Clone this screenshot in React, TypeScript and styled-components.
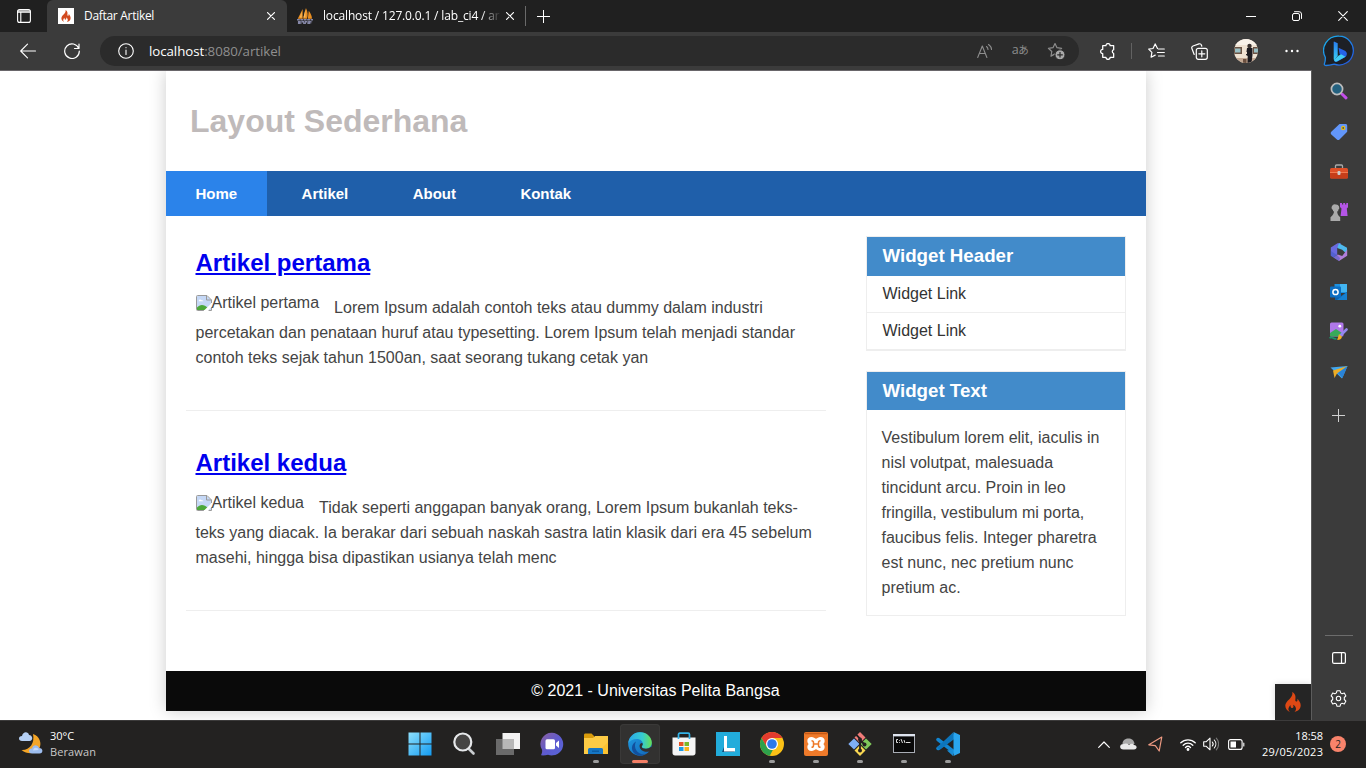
import React from "react";
import styled, { createGlobalStyle } from "styled-components";

const Global = createGlobalStyle`
  * { box-sizing: border-box; }
  html, body { margin: 0; padding: 0; }
  body { width: 1366px; height: 768px; overflow: hidden; background: #fff; }
  svg { display: block; flex: none; }
`;

const uiFont = `"Open Sans", "Noto Sans", sans-serif`;

/* ---------- desktop frame ---------- */

const Screen = styled.div`
  width: 1366px;
  height: 768px;
  display: flex;
  flex-direction: column;
  font-family: ${uiFont};
`;

const Slot = styled.div<{ $w: number; $h?: number; $color?: string }>`
  width: ${(p) => p.$w}px;
  ${(p) => (p.$h ? `height: ${p.$h}px;` : "")}
  ${(p) => (p.$color ? `color: ${p.$color};` : "")}
  flex: none;
  display: flex;
  align-items: center;
  justify-content: center;
`;

/* ---------- tab strip ---------- */

const TabStrip = styled.div`
  height: 32px;
  flex: none;
  display: flex;
  background: #202020;
  color: #fff;
`;

const Tab = styled.div<{ $active?: boolean }>`
  width: ${(p) => (p.$active ? 240 : 238)}px;
  height: 32px;
  padding: 0 ${(p) => (p.$active ? 8 : 7)}px 0 ${(p) => (p.$active ? 11 : 10)}px;
  display: flex;
  align-items: center;
  background: ${(p) => (p.$active ? "#3b3b3b" : "transparent")};
  border-radius: 6px 6px 0 0;
`;

const TabTitle = styled.span<{ $faded?: boolean; $spacing: number }>`
  flex: 1;
  margin-left: 10px;
  font-size: 12px;
  line-height: 16px;
  letter-spacing: ${(p) => p.$spacing}px;
  white-space: nowrap;
  ${(p) =>
    p.$faded
      ? "mask-image: linear-gradient(to right, #000 158px, transparent 178px);"
      : ""}
`;

const StripDivider = styled.div`
  width: 1px;
  height: 20px;
  margin-top: 6px;
  background: #6a6a6a;
`;

const Grow = styled.div`
  flex: 1;
`;

/* ---------- toolbar ---------- */

const Toolbar = styled.div`
  height: 38px;
  flex: none;
  display: flex;
  align-items: center;
  padding-left: 6px;
  background: #3b3b3b;
  color: #fff;
`;

const AddressBar = styled.div`
  width: 979px;
  height: 30px;
  margin: 0 6px;
  padding: 0 5px 0 16px;
  display: flex;
  align-items: center;
  border-radius: 15px;
  background: #2b2b2b;
`;

const Url = styled.div`
  flex: 1;
  margin-left: 13px;
  font-size: 13.3px;
  letter-spacing: -0.06px;
  color: #8f8f8f;
  b { font-weight: 400; color: #fff; }
`;

const Translate = styled.span`
  padding-bottom: 3px;
  font: 12.5px/16px "Open Sans", "Noto Sans CJK JP", sans-serif;
  letter-spacing: -0.4px;
  color: #8d8d8d;
  small { font-size: 10.5px; }
`;

const ToolDivider = styled.div`
  width: 1px;
  height: 16px;
  margin: 0 2px;
  background: #626262;
`;

/* ---------- body ---------- */

const Body = styled.div`
  height: 650px;
  flex: none;
  display: flex;
`;

const Viewport = styled.div`
  position: relative;
  width: 1311px;
  height: 650px;
  overflow: hidden;
  border-top: 1px solid #69666a;
  background: #fff;
  font-family: "Liberation Sans", Arial, sans-serif;
  font-size: 16px;
  color: #444;
`;

const EdgeRail = styled.div`
  width: 55px;
  padding: 0.5px 0 1px;
  display: flex;
  flex-direction: column;
  background: #3b3b3b;
  border-left: 1px solid #5c5c5c;
`;

const RailDivider = styled.div`
  width: 28px;
  height: 1px;
  margin: 0 0 1px 13px;
  background: #6c6c6c;
`;

const DebugToggle = styled.div`
  position: absolute;
  right: 0;
  bottom: 0;
  width: 36px;
  height: 36px;
  display: flex;
  align-items: center;
  justify-content: center;
  background: #252525;
  box-shadow: 0 0 6px rgba(0, 0, 0, 0.15);
`;

/* ---------- web page ---------- */

const Container = styled.div`
  width: 980px;
  margin: 0 auto;
  background: #fff;
  box-shadow: 0 0 16px #ccc;
`;

const Header = styled.header`
  height: 100px;
  padding-left: 24.5px;
  display: flex;
  align-items: center;
`;

const SiteTitle = styled.h1`
  margin: 0;
  font-size: 32px;
  line-height: 36px;
  color: #bfbaba;
`;

const Nav = styled.nav`
  height: 45px;
  display: flex;
  gap: 4.4px;
  background: #1f5faa;
`;

const NavLink = styled.a<{ $active?: boolean }>`
  padding: 0 30px;
  font-size: 15px;
  font-weight: 700;
  line-height: 46px;
  color: #fff;
  background: ${(p) => (p.$active ? "#2b83ea" : "transparent")};
`;

const Columns = styled.div`
  height: 455px;
  padding: 20px 20px 0;
  display: flex;
  justify-content: space-between;
`;

const Articles = styled.main`
  width: 640px;
`;

const Entry = styled.article`
  height: 200px;
  padding: 38px 10px 0;
  border-bottom: 1px solid #eee;
  &:first-child { height: 175px; padding-top: 13px; }
`;

const EntryTitle = styled.h2`
  margin: 0 0 18px;
  font-size: 24px;
  line-height: 28px;
  color: #0000ee;
  text-decoration: underline;
`;

const EntryText = styled.p`
  margin: 0;
  line-height: 25px;
`;

const MissingImage = styled.span`
  float: left;
  display: flex;
  height: 18px;
  margin-right: 15px;
  line-height: 16px;
`;

const Aside = styled.aside`
  width: 260px;
`;

const Widget = styled.section`
  margin-bottom: 20px;
  border: 1px solid #eee;
`;

const WidgetTitle = styled.h3`
  height: 38.5px;
  margin: 0;
  padding: 0 16px;
  font-size: 18.72px;
  line-height: 37px;
  color: #fff;
  background: #428bca;
`;

const WidgetLink = styled.a`
  display: block;
  padding: 0 16px;
  line-height: 36px;
  border-bottom: 1px solid #eee;
  color: #333;
`;

const WidgetText = styled.p`
  margin: 0;
  padding: 15px 14px 15px 15px;
  line-height: 25px;
`;

const Footer = styled.footer`
  height: 40px;
  line-height: 40px;
  text-align: center;
  color: #fff;
  background: #0a0a0a;
`;

/* ---------- taskbar ---------- */

const Taskbar = styled.div`
  height: 48px;
  flex: none;
  display: flex;
  align-items: center;
  box-shadow: inset 0 1px #3c3b3b;
  background: #232221;
  color: #fff;
`;

const Weather = styled.div`
  width: 398px;
  padding-left: 18px;
  display: flex;
  align-items: center;
  gap: 6px;
`;

const Lines = styled.div<{ $right?: boolean }>`
  font-size: 11px;
  line-height: 16px;
  letter-spacing: -0.05px;
  text-align: ${(p) => (p.$right ? "right" : "left")};
`;

const Muted = styled.div`
  color: #c8c8c8;
  letter-spacing: 0.1px;
`;

const DateLine = styled.div`
  letter-spacing: 0.3px;
  margin-right: -0.3px;
`;

const AppButton = styled.div<{ $current?: boolean }>`
  position: relative;
  width: 40px;
  height: 40px;
  margin: 0 2px;
  flex: none;
  display: flex;
  align-items: center;
  justify-content: center;
  border-radius: 4px;
  background: ${(p) => (p.$current ? "#323130" : "transparent")};
  box-shadow: ${(p) => (p.$current ? "inset 0 0 0 1px #3a3938" : "none")};
`;

const Running = styled.i<{ $current?: boolean }>`
  position: absolute;
  bottom: 1px;
  left: 50%;
  width: ${(p) => (p.$current ? 16 : 6)}px;
  height: 3px;
  transform: translateX(-50%);
  border-radius: 2px;
  background: ${(p) => (p.$current ? "#f47f66" : "#9b9b9b")};
`;

const Clock = styled.div`
  width: 68px;
`;

const Badge = styled.div`
  width: 16px;
  height: 16px;
  margin: 0 20px 0 7px;
  border-radius: 50%;
  font-size: 10px;
  line-height: 16px;
  text-align: center;
  color: #222;
  background: #f8836b;
`;

/* ---------- drawings ---------- */

type SP = { w: number; h?: number; vb: string; children: React.ReactNode; sw?: number };
const Line = ({ w, h = w, vb, children, sw = 1 }: SP) => (
  <svg width={w} height={h} viewBox={vb} fill="none" stroke="currentColor" strokeWidth={sw} strokeLinecap="round" strokeLinejoin="round">
    {children}
  </svg>
);
const Art = ({ w, h = w, vb, children }: SP) => (
  <svg width={w} height={h} viewBox={vb}>{children}</svg>
);

const flamePath = "M7.2 0c.7 2.500-.3 4.200-2 6.200C3.100 8.600.3 10.600.3 13.800c0 3 2 5.200 4.700 6.100-1.400-1.100-1.900-2.500-1.400-4 .3-1.100 1.100-1.900 1.800-2.900.3 1.300 0 2.300 1.100 2.900 1.800.8 2.600-1.100 1.500-3.200 2.900 1.200 4.300 5 1.500 7.200 3.600-.7 6.200-3.200 6.200-6.700 0-3-1.900-4.500-3.100-6.500-.4 1 .2 2.100-.7 2.700-.9.500-1.800-.1-1.600-1.300C10.700 5 11 2.100 7.200 0z";

const Flame = () => (
  <Art w={16} h={20} vb="0 0 16 20"><path fill="#dd4814" d={flamePath} /></Art>
);

const Close = ({ w = 8, sw = 1.2 }: { w?: number; sw?: number }) => (
  <Line w={w} vb="0 0 10 10" sw={(sw * 10) / w}><path d="M.7.7l8.600 8.600M9.300.7L.7 9.300" /></Line>
);

const Plus = ({ w }: { w: number }) => (
  <svg width={w} height={w} viewBox="0 0 13 13" stroke="currentColor" fill="none"><path d="M6.500 0v13M0 6.500h13" /></svg>
);

const Sailboats = () => (
  <Art w={16} vb="0 0 17 17">
    <path fill="#e88d20" d="M6 1v10.500H.8zM9.500 0c2 4 2.500 8 1 11.500H6.500zM12.500 3c2 3 3.800 6 3.300 8.500h-4.300z" />
    <path fill="#f7b95b" d="M9 1v9H6.800zM5 4v6H3z" />
    <path d="M0 12.500h17M1 14.500h15M1 16.300h4M6.500 16.300h3M11 16.300h4" stroke="#8688a8" strokeWidth="1.600" strokeDasharray="3 .6" />
  </Art>
);

const BrokenImage = () => (
  <Art w={16} vb="0 0 16 16">
    <path fill="#c5d8f6" d="M1 1h10l4 4v10H1z" />
    <path fill="#fff" d="M2.800 6.200c-.3-1.800 2-2.400 2.700-1C7.200 4.800 7.800 6.200 6.800 6.200z" />
    <path fill="#4ca83b" d="M1 15v-2.500C4 9 8 9 12 13l-2 2z" />
    <path fill="none" stroke="#9a9a9a" d="M8 15.500H1.500a1 1 0 0 1-1-1v-13a1 1 0 0 1 1-1h9.500l4.500 4.500v3M10.500.5v4.500h5M12.500 15.500h3V12" />
    <path fill="#fff" d="M16 7.800L7.500 16h4L16 11.500z" />
  </Art>
);

const Avatar = () => (
  <Art w={24} vb="0 0 24 24">
    <defs><clipPath id="face"><circle cx="12" cy="12" r="12" /></clipPath></defs>
    <g clipPath="url(#face)">
      <path fill="#efe2d2" d="M0 0h24v24H0z" />
      <path fill="#f8f1e8" d="M0 0h24v6H0z" />
      <path fill="#6b5344" d="M0 8h8v7H0zM19 8h5v7h-5z" />
      <path fill="#9ac0c4" d="M1 9.500h5.500v4H1zM20 9.500h4v4h-4z" />
      <path fill="#c3a893" d="M0 19h24v5H0z" />
      <circle cx="15.500" cy="7" r="2.200" fill="#38302d" />
      <path fill="#1d1b20" d="M13 9h5.500v7L17.500 24h-4l.2-7-1.700-1z" />
      <path fill="#f1dfcf" d="M10.500 13h2.500v2h-2.500z" />
      <path fill="#6b5040" d="M9 20h3.500v4H9z" />
    </g>
  </Art>
);

const Bing = () => (
  <Art w={32} vb="0 0 32 32">
    <defs>
      <linearGradient id="bo" x1="0" y1="0" x2="1" y2="1"><stop offset="0" stopColor="#18b7ee" /><stop offset="1" stopColor="#2550df" /></linearGradient>
      <linearGradient id="bi" x1="0" y1="0" x2="0" y2="1"><stop offset="0" stopColor="#2a7df0" /><stop offset="1" stopColor="#38cff4" /></linearGradient>
    </defs>
    <path fill="#1d2026" stroke="url(#bo)" strokeWidth="1.300" d="M16 1.200a14.400 14.400 0 1 1-4.800 28c-2.600.7-5.600 1.300-8.200 1.300-1.500 0-2-.8-1.500-2 .8-2 .9-4 .8-6.200A14.400 14.400 0 0 1 16 1.200z" />
    <path fill="url(#bi)" d="M11 6.500l3.700 1.700v12.600l-3.300 4.400c-.6-.4-.7-1-.7-2V7z" />
    <path fill="#2563e8" d="M15.500 12.800l6.500 3c2.300 1.200 2.500 4 .7 6l-8.300 4.600c-1.700.9-3 .2-3.300-1.200l6.900-5.100-1.300-.8z" />
    <path fill="#42cdf5" d="M15 21l3-1.800 4.500 2.600-8.200 4.500c-1.700.8-2.700.2-3.200-1.200z" />
  </Art>
);

const railIcons: React.ReactNode[] = [
  <Art w={18} vb="0 0 18 18"><path d="M12 12l4 3.800" stroke="#c34de9" strokeWidth="3" strokeLinecap="round" /><circle cx="7" cy="7" r="5.600" fill="#24617f" stroke="#bcbcbc" strokeWidth="1.700" /></Art>,
  <Art w={18} vb="0 0 18 18"><path fill="#6296fa" d="M9.500 1h6C16.500 1 17.200 1.700 17.200 2.700v6L9.500 16.500c-.8.8-1.800.8-2.600 0L1.300 11.400c-.8-.8-.8-1.800 0-2.600z" /><circle cx="13.200" cy="5" r="1.600" fill="#555" stroke="#e3bd1c" strokeWidth="1.300" /></Art>,
  <Art w={18} vb="0 0 18 18"><path d="M5.500 5V3c0-.6.400-1 1-1h5c.6 0 1 .4 1 1v2" fill="none" stroke="#aaa" strokeWidth="1.300" /><rect y="5" width="18" height="10.500" rx="1.500" fill="#df5028" /><path d="M0 10h18v4a1.500 1.500 0 0 1-1.500 1.500h-15A1.500 1.500 0 0 1 0 14z" fill="#c63e1a" /><path d="M0 9.500h18" stroke="#f27b50" /><rect x="7.500" y="8" width="3" height="4" rx="1" fill="#ccc" /></Art>,
  <Art w={18} vb="0 0 18 18"><path fill="#b455e6" d="M10 0h2v1.500h1.200V0h1.900v1.500h1.200V0h2v4l-1.500 1.500.8 7.500h-7l.9-7.500L10 4z" /><path fill="#aaa" d="M6 1.500a3.200 3.200 0 0 1 2.200 5.600v1.200H7.200c0 2 .5 4 3 6V18H.5v-3.700c2.500-2 3.500-4 3.500-6H3V7.100A3.200 3.200 0 0 1 6 1.500z" /></Art>,
  <Art w={18} vb="0 0 18 18"><path fill="#6a6ae0" d="M7.500.3L11 0 7.200 5v6.500L3.500 14.500.8 12.800V4.500z" /><path fill="#4eb9ee" d="M9 .2l8 4.500v6.500l-4.800-4.500L7.200 5z" /><path fill="#b07edb" d="M17.200 6.500v6.300L9 18 3.500 14.500l4.200-3 4.500 1.500z" /><path fill="#3b58c0" d="M.8 8v4.800L9 18l1-3-3-3z" opacity=".5" /></Art>,
  <Art w={18} vb="0 0 18 18"><path fill="#1c91df" d="M4.500 1h12v9h-12z" /><path fill="#42b5f2" d="M10 1h7v8h-7z" /><path fill="#0b62ad" d="M5 9l6 4 6-4v8H5z" /><path fill="#1680d0" d="M17 9v8H7z" /><rect x="0" y="3.500" width="11" height="11" rx="1" fill="#0c6fc3" /><circle cx="5.500" cy="9" r="2.600" fill="none" stroke="#fff" strokeWidth="1.500" /></Art>,
  <Art w={19} vb="0 0 19 19"><rect x="1" y=".5" width="13.500" height="14" rx="1.500" fill="#b078ea" /><circle cx="10.800" cy="4.200" r="1.400" fill="#fff" /><path fill="#38aa5a" d="M1 11l6-4 6 4v3.500H1z" /><path d="M.5 16c3-2 3.500 1.500 7 .8" stroke="#1d946b" strokeWidth="1.600" fill="none" /><path d="M12 13l5.500-5.500" stroke="#9288ef" strokeWidth="2.600" strokeLinecap="round" /><path fill="#f4af24" d="M10 12l3 2.800c-.5 2.500-2 3.200-4.800 3.200z" /></Art>,
  <Art w={18} vb="0 0 18 18"><path fill="#41a7ef" d="M.5 4.500L17.500 3 12 15.500z" /><path fill="#ecac26" d="M3 7.500L17.500 3 7 10.500l-2.500 4.500z" /><path fill="#2a83d6" d="M17.500 3L8 10l4.500 5z" /></Art>,
];

const Folder = () => (
  <Art w={24} vb="0 0 24 24"><path fill="#d99b0b" d="M0 3c0-1 .5-1.500 1.500-1.500h6L10 4v4H0z" /><path fill="#fccb45" d="M0 6h9l2-2h13v18H0z" /><path fill="#f7b91e" d="M24 10v12H12z" opacity=".5" /><path fill="#1677c4" d="M4 17.500A1.500 1.500 0 0 1 5.500 16h12a1.500 1.500 0 0 1 1.500 1.500V22H4z" /><path stroke="#0a559a" strokeWidth="1.200" d="M8 19.200h7" /></Art>
);

const EdgeLogo = () => (
  <Art w={24} vb="0 0 24 24">
    <defs>
      <linearGradient id="e1"><stop offset="0" stopColor="#2ba8e8" /><stop offset=".6" stopColor="#36cbd0" /><stop offset="1" stopColor="#68e052" /></linearGradient>
      <linearGradient id="e2" x1="0" y1="0" x2="1" y2="1"><stop offset="0" stopColor="#1f9ee4" /><stop offset="1" stopColor="#1263b5" /></linearGradient>
    </defs>
    <circle cx="12" cy="12" r="11.800" fill="url(#e2)" />
    <path fill="url(#e1)" d="M.3 11C1 5 6 .2 12 .2c7 0 11.800 5 11.800 10.300 0 4-2.800 6.200-5.800 6.200-2.500 0-4.200-1-4.200-2 0-.8 1-1.200 1-2.900 0-2.500-2.300-4.800-6-4.800-4 0-7.100 2-8.500 4z" />
    <path fill="#12509d" d="M8 9.500c-3 6 1 13.300 9 13-2 1.200-4 1.400-6 1.100-5-1-7.500-5-7-8.600.4-2.500 2-4.500 4-5.500z" />
    <path fill="#323130" d="M14.800 11.800c0 1.700-1 2-1 2.900 0 1 1.700 2 4.200 2 2 0 3.600-.8 4.600-1.700l1.400 0-.8 3.500c-2 1.500-5.200 1.700-7.600.7-3-1-4.400-3.500-4-6 .4-1.800 2.300-3.200 3.200-1.400z" />
  </Art>
);

const Chrome = () => (
  <Art w={24} vb="0 0 24 24">
    <circle cx="12" cy="12" r="12" fill="#fbc116" />
    <path fill="#e33b2e" d="M1.600 6A12 12 0 0 1 22.400 6H12L6.800 15z" />
    <path fill="#2da14c" d="M1.600 6l5.200 9c1.500 2.300 3.500 3.200 6 3l-3 5.800A12 12 0 0 1 1.600 6z" />
    <circle cx="12" cy="12" r="6" fill="#fff" /><circle cx="12" cy="12" r="4.800" fill="#2d78ea" />
  </Art>
);

const Xampp = () => (
  <Art w={24} vb="0 0 24 24">
    <rect width="24" height="24" rx="2" fill="#ee7a2a" />
    <path d="M1 1.500h22" stroke="#c65a16" strokeWidth="1.500" />
    <path d="M8.500 12C3.500 12 3.500 6.200 7.500 6.200c2 0 2.500 1.800 4.500 1.800s2.500-1.800 4.500-1.800c4 0 4 5.800-1 5.800 5 0 5 5.800 1 5.800-2 0-2.500-1.800-4.500-1.800s-2.500 1.800-4.500 1.800c-4 0-4-5.800 1-5.800z" fill="#fff" stroke="#fff" strokeWidth="2.600" strokeLinejoin="round" />
    <path d="M7.500 8.700c1.500 0 2 .8 2 1.800v3c0 1-.5 1.800-2 1.800M16.500 8.700c-1.500 0-2 .8-2 1.800v3c0 1 .5 1.800 2 1.800M9.500 12h5" stroke="#ee7a2a" strokeWidth="1.500" fill="none" />
  </Art>
);

type AppEntry = { icon: React.ReactNode; running?: boolean; current?: boolean };
const apps: AppEntry[] = [
  { icon: <Art w={24} vb="0 0 24 24"><defs><linearGradient id="wn" x1="0" y1="0" x2="1" y2="1"><stop offset="0" stopColor="#8ee0fd" /><stop offset="1" stopColor="#139bf1" /></linearGradient></defs><path fill="url(#wn)" d="M.5.5h11v11H.5zM12.500.5h11v11h-11zM.5 12.500h11v11H.5zM12.500 12.500h11v11h-11z" /></Art> },
  { icon: <Art w={24} vb="0 0 24 24"><path d="M16.500 16.500l5 5" stroke="#c9cdd0" strokeWidth="2.600" strokeLinecap="round" /><circle cx="10.800" cy="10" r="8.500" fill="#454443" stroke="#e6e8ea" strokeWidth="2.200" /></Art> },
  { icon: <Art w={24} vb="0 0 24 24"><path fill="#f2f2f2" d="M6.500 1H24v16H6.500z" /><path fill="#6a6a6a" d="M0 7h18v16H0z" /><path fill="#b7b7b7" d="M6.500 7H18v10H6.500z" /></Art> },
  { icon: <Art w={24} vb="0 0 24 24"><defs><linearGradient id="ch" x1="0" y1="0" x2="1" y2="1"><stop offset="0" stopColor="#8a5f9f" /><stop offset=".55" stopColor="#5d5bd0" /><stop offset="1" stopColor="#5867d9" /></linearGradient></defs><path fill="url(#ch)" d="M12 .8a11.300 11.300 0 1 1-4 21.900c-2 .6-4.500.8-7 .6.800-2 1.500-3.500 1-5.500A11.300 11.300 0 0 1 12 .8z" /><rect x="5.500" y="7.200" width="9.500" height="10" rx="1.500" fill="#fff" /><path fill="#fff" d="M16 11l3-2.500V16l-3-2.500z" /></Art> },
  { icon: <Folder />, running: true },
  { icon: <EdgeLogo />, running: true, current: true },
  { icon: <Art w={24} vb="0 0 24 24"><path fill="#f5f5f5" d="M.5 5.500h23V21c0 1.500-1 2.500-2.500 2.500H3C1.500 23.500.5 22.500.5 21z" /><path d="M6.500 7V2.500c0-.8.500-1.300 1.300-1.300h8.400c.8 0 1.300.5 1.300 1.300V7" fill="none" stroke="#35b4e8" strokeWidth="1.700" /><path fill="#e85425" d="M7 10h4.500v4H7z" /><path fill="#7ab828" d="M12.500 10H17v4h-4.500z" /><path fill="#1a9be6" d="M7 15h4.500v4H7z" /><path fill="#f9b31b" d="M12.500 15H17v4h-4.500z" /></Art> },
  { icon: <Art w={24} vb="0 0 24 24"><path fill="#22acdb" d="M0 0h24v24H0z" /><path fill="#154b78" d="M8 4v11l-2 5h12l1-1H9z" /><path fill="#fff" d="M8 4h3v12h8v3.500H8z" /></Art> },
  { icon: <Chrome />, running: true },
  { icon: <Xampp />, running: true },
  { icon: <Art w={24} vb="0 0 24 24"><path fill="#f07c78" d="M12 0l5.500 5.500L12 11 6.500 5.500z" /><path fill="#7eaef5" d="M6 6.500l5.500 5.500L6 17.500.3 12z" /><path fill="#80c95b" d="M18 6.500l5.700 5.500-5.700 5.500-5.500-5.500z" /><path fill="#f9d852" d="M12 13l5.500 5.500L12 24l-5.500-5.500z" /><path d="M8 2.500l4 4V19M12 8l4.500 4.500" stroke="#231f20" strokeWidth="1.800" fill="none" /><circle cx="12" cy="7.500" r="2" fill="#231f20" /><circle cx="16.500" cy="12.500" r="2" fill="#231f20" /><circle cx="12" cy="18.500" r="2" fill="#231f20" /></Art>, running: true },
  { icon: <Art w={24} vb="0 0 24 24"><path fill="#a9adb5" d="M1 2h22v19H1z" /><path fill="#dfe5ef" d="M1 2h22v2H1z" /><path fill="#090909" d="M2 4.500h20v15.500H2z" /><path d="M6 7.500H4.500v3H6M7.500 8v.8M7.500 10v.8M9 7l1.500 4M12 8l1 3" stroke="#ddd" fill="none" /><path d="M14 10.500h4.500" stroke="#ddd" /></Art>, running: true },
  { icon: <Art w={24} vb="0 0 24 24"><path d="M2 7.500L18 20M2 16.500L18 4" stroke="#1285cf" strokeWidth="3.500" strokeLinecap="round" /><path fill="#0d75bb" d="M1 15.500L17 .5l2 6L3.500 18z" /><path fill="#29a5ee" d="M17.500 0L24 3v18l-6.500 3z" /><path fill="#188bd5" d="M17 17.500V24l-6-5.500z" /></Art>, running: true },
];

const WeatherIcon = () => (
  <Art w={26} vb="0 0 26 26">
    <path fill="#f4a526" d="M15 3c6.500 2 9 9 6.500 14-3.500 6-11.500 7-18 2 8 .5 13.500-6.500 11.500-16z" />
    <path fill="#b5d0f5" d="M4 10c-4 0-4-5 0-5C5 0 10.500.5 11 4c4 0 4.500 6 .5 6z" />
    <path fill="#9dbdee" d="M14 22.500c-4 0-4-5.500 0-5 1-4.500 6-4 7-.5 4.500 0 4.500 5.500.5 5.500z" />
    <path fill="#c8dcfa" d="M15 19.500c1-4 5-3 5.500-.5z" />
  </Art>
);

/* ---------- page ---------- */

const articles = [
  { title: "Artikel pertama", text: "Lorem Ipsum adalah contoh teks atau dummy dalam industri percetakan dan penataan huruf atau typesetting. Lorem Ipsum telah menjadi standar contoh teks sejak tahun 1500an, saat seorang tukang cetak yan" },
  { title: "Artikel kedua", text: "Tidak seperti anggapan banyak orang, Lorem Ipsum bukanlah teks-teks yang diacak. Ia berakar dari sebuah naskah sastra latin klasik dari era 45 sebelum masehi, hingga bisa dipastikan usianya telah menc" },
];

const WebPage = () => (
  <Container>
    <Header><SiteTitle>Layout Sederhana</SiteTitle></Header>
    <Nav>
      <NavLink $active>Home</NavLink>
      <NavLink>Artikel</NavLink>
      <NavLink>About</NavLink>
      <NavLink>Kontak</NavLink>
    </Nav>
    <Columns>
      <Articles>
        {articles.map((a) => (
          <Entry key={a.title}>
            <EntryTitle>{a.title}</EntryTitle>
            <EntryText><MissingImage><BrokenImage />{a.title}</MissingImage>{a.text}</EntryText>
          </Entry>
        ))}
      </Articles>
      <Aside>
        <Widget>
          <WidgetTitle>Widget Header</WidgetTitle>
          <WidgetLink>Widget Link</WidgetLink>
          <WidgetLink>Widget Link</WidgetLink>
        </Widget>
        <Widget>
          <WidgetTitle>Widget Text</WidgetTitle>
          <WidgetText>Vestibulum lorem elit, iaculis in nisl volutpat, malesuada tincidunt arcu. Proin in leo fringilla, vestibulum mi porta, faucibus felis. Integer pharetra est nunc, nec pretium nunc pretium ac.</WidgetText>
        </Widget>
      </Aside>
    </Columns>
    <Footer>© 2021 - Universitas Pelita Bangsa</Footer>
  </Container>
);

const starPath = "M8 1.500l2 4.200 4.600.6-3.400 3.200.8 4.600L8 11.900l-4 2.200.8-4.600L1.400 6.300 6 5.700z";

export default function App() {
  return (
    <Screen>
      <Global />
      <TabStrip>
        <Slot $w={47}><Line w={14} vb="0 0 14 14" sw={1.1}><rect x=".6" y=".6" width="12.800" height="12.800" rx="2" /><path d="M.6 3.200h12.800M3.800 3.200v10M1 2h12" /></Line></Slot>
        <Tab $active>
          <Art w={16} vb="0 0 16 16"><path fill="#fff" d="M0 0h16v16H0z" /><svg x="3" y="2" width="10" height="12" viewBox="0 0 16 20"><path fill="#d2481d" d={flamePath} /></svg></Art>
          <TabTitle $spacing={-0.3}>Daftar Artikel</TabTitle>
          <Slot $w={16}><Close w={8} /></Slot>
        </Tab>
        <Tab>
          <Sailboats />
          <TabTitle $faded $spacing={-0.16}>localhost / 127.0.0.1 / lab_ci4 / ar</TabTitle>
          <Slot $w={16}><Close w={8} /></Slot>
        </Tab>
        <StripDivider />
        <Slot $w={35}><Plus w={13} /></Slot>
        <Grow />
        <Slot $w={46}><Line w={10} vb="0 0 10 10"><path d="M0 5.500h10" /></Line></Slot>
        <Slot $w={46}><Line w={10} vb="0 0 10 10"><rect x=".5" y="2.500" width="7" height="7" rx="1.500" /><path d="M2.500.7H7A2.400 2.400 0 0 1 9.500 3v4.500" /></Line></Slot>
        <Slot $w={46}><Close w={10} sw={1.1} /></Slot>
      </TabStrip>

      <Toolbar>
        <Slot $w={44}><Line w={16} vb="0 0 16 16" sw={1.1}><path d="M15.500 8H.7M7.500 1.200L.7 8l6.800 6.800" /></Line></Slot>
        <Slot $w={44}><Line w={16} vb="0 0 16 16" sw={1.2}><path d="M14.800 5.500A7.300 7.300 0 1 0 15.300 8M15 1v4.500h-4.500" /></Line></Slot>
        <AddressBar>
          <Slot $w={20}><Line w={16} vb="0 0 16 16" sw={1.1}><circle cx="8" cy="8" r="7.300" /><path d="M8 7v4.500M8 4.600v.2" /></Line></Slot>
          <Url><b>localhost</b>:8080/artikel</Url>
          <Slot $w={35} $color="#8d8d8d"><Line w={16} vb="0 0 16 16" sw={1.1}><path d="M.7 14.500L5.300 3l4.600 11.500M2.300 10.500h6M9.500 3.500c1 .8 1.500 1.800 1.500 3M11.500 1.500c2 1.300 3 3 3 5" /></Line></Slot>
          <Slot $w={36}><Translate>a<small>あ</small></Translate></Slot>
          <Slot $w={36}><Art w={18} vb="0 0 18 18"><path d={starPath} fill="none" stroke="#8d8d8d" strokeWidth="1.200" strokeLinejoin="round" /><circle cx="13" cy="12.800" r="5" fill="#a9a9a9" stroke="#2b2b2b" /><path d="M13 10v5.600M10.200 12.800h5.600" stroke="#2b2b2b" strokeWidth="1.200" /></Art></Slot>
        </AddressBar>
        <Slot $w={44}><Line w={17} vb="0 0 16 16" sw={1.2}><path d="M3.500 2.500h3a2 2 0 0 1 4 0h3.300v3.800a1.900 1.900 0 0 0 0 3.600v3.600h-3.300a2 2 0 0 1-4 0h-3V10a2 2 0 0 1 0-4z" /></Line></Slot>
        <ToolDivider />
        <Slot $w={44}><Line w={17} h={16} vb="0 0 17 16" sw={1.2}><path d="M9.500 5.500L7.200.9 5 5.500l-4.300.6 3.200 3.300-.8 4.800 4.100-2.100M10.500 6h5.800M9.500 9.500h6.800M10.500 13h5.800" /></Line></Slot>
        <Slot $w={43}><Line w={17} vb="0 0 17 17" sw={1.2}><path d="M3.200 11.500L.9 5.500C.5 4.500.9 3.500 2 3l6-2.100c1.200-.4 2 .1 2.400 1.100l.4 1.200" /><rect x="5.300" y="5.300" width="11" height="11" rx="2" /><path d="M10.800 7.800v6M7.800 10.800h6" /></Line></Slot>
        <Slot $w={49}><Avatar /></Slot>
        <Slot $w={44}><Art w={14} h={4} vb="0 0 14 4"><circle cx="1.500" cy="2" r="1.200" fill="#fff" /><circle cx="7" cy="2" r="1.200" fill="#fff" /><circle cx="12.500" cy="2" r="1.200" fill="#fff" /></Art></Slot>
        <Slot $w={50}><Bing /></Slot>
      </Toolbar>

      <Body>
        <Viewport>
          <WebPage />
          <DebugToggle><Flame /></DebugToggle>
        </Viewport>
        <EdgeRail>
          {railIcons.map((icon, i) => <Slot key={i} $w={53} $h={i ? 40 : 41}>{icon}</Slot>)}
          <Slot $w={53} $h={47} $color="#d0d0d0"><Plus w={13} /></Slot>
          <Grow />
          <RailDivider />
          <Slot $w={54} $h={41} $color="#fff"><Line w={14} h={12} vb="0 0 14 12" sw={1.2}><rect x=".6" y=".6" width="12.800" height="10.800" rx="1.500" /><path d="M9.500.6v10.800" /></Line></Slot>
          <Slot $w={53} $h={41} $color="#fff"><Line w={17} vb="0 0 17 17" sw={1.1}><circle cx="8.500" cy="8.500" r="2.200" /><path d="M6.900.8h3.200l.5 2.100 1.500.9 2.200-.7 1.600 2.800-1.600 1.600v2l1.600 1.600-1.600 2.800-2.200-.7-1.500.9-.5 2.100H6.900l-.5-2.100-1.500-.9-2.200.7-1.600-2.800 1.600-1.600v-2L1.100 5.900l1.600-2.800 2.200.7 1.500-.9z" /></Line></Slot>
        </EdgeRail>
      </Body>

      <Taskbar>
        <Weather>
          <WeatherIcon />
          <Lines>30°C<Muted>Berawan</Muted></Lines>
        </Weather>
        {apps.map((a, i) => (
          <AppButton key={i} $current={a.current}>
            {a.icon}
            {a.running && <Running $current={a.current} />}
          </AppButton>
        ))}
        <Grow />
        <Slot $w={24}><Line w={12} h={7} vb="0 0 12 7" sw={1.2}><path d="M.7 6.300L6 1l5.300 5.300" /></Line></Slot>
        <Slot $w={24}><Art w={17} h={12} vb="0 0 17 12"><path fill="#a9a9a9" d="M2.500 6C2.500 2 5.500.5 8.500.5S14 2 14.500 6z" /><path fill="#e9e9e9" d="M3.500 11.500c-4.500 0-4.500-5.500 0-5.500 2-1 4-.5 5.500.7 2-1.500 4.500-1.200 5 .3 3.500 0 3.500 4.500 0 4.500z" /></Art></Slot>
        <Slot $w={30}><Line w={15} h={16} vb="0 0 15 16" sw={1.2}><path stroke="#ef9b83" d="M13.800 1L.8 8.800l6.500.9 3.900 5.300z" /></Line></Slot>
        <Slot $w={35}><Line w={16} h={13} vb="0 0 16 13" sw={1.3}><path d="M.8 4.800a10.200 10.200 0 0 1 14.400 0M3.200 7.200a6.800 6.800 0 0 1 9.600 0M5.500 9.500a3.600 3.600 0 0 1 5 0" /><circle cx="8" cy="11.500" r=".8" fill="currentColor" /></Line></Slot>
        <Slot $w={12}><Line w={16} h={14} vb="0 0 16 14" sw={1.1}><path d="M.7 4.700h2.600L7 1.200v11.600L3.300 9.300H.7zM9.300 5a3 3 0 0 1 0 4M11.300 3a6 6 0 0 1 0 8" /><path d="M13.300 1.200a8.500 8.500 0 0 1 0 11.600" stroke="#777" /></Line></Slot>
        <Slot $w={38}><Line w={17} h={11} vb="0 0 17 11" sw={1.1}><rect x=".6" y=".6" width="13.500" height="9.800" rx="2" /><rect x="2.500" y="2.500" width="5.500" height="6" fill="currentColor" stroke="none" /><path d="M15.800 4v3" /></Line></Slot>
        <Clock><Lines $right>18:58<DateLine>29/05/2023</DateLine></Lines></Clock>
        <Badge>2</Badge>
      </Taskbar>
    </Screen>
  );
}
